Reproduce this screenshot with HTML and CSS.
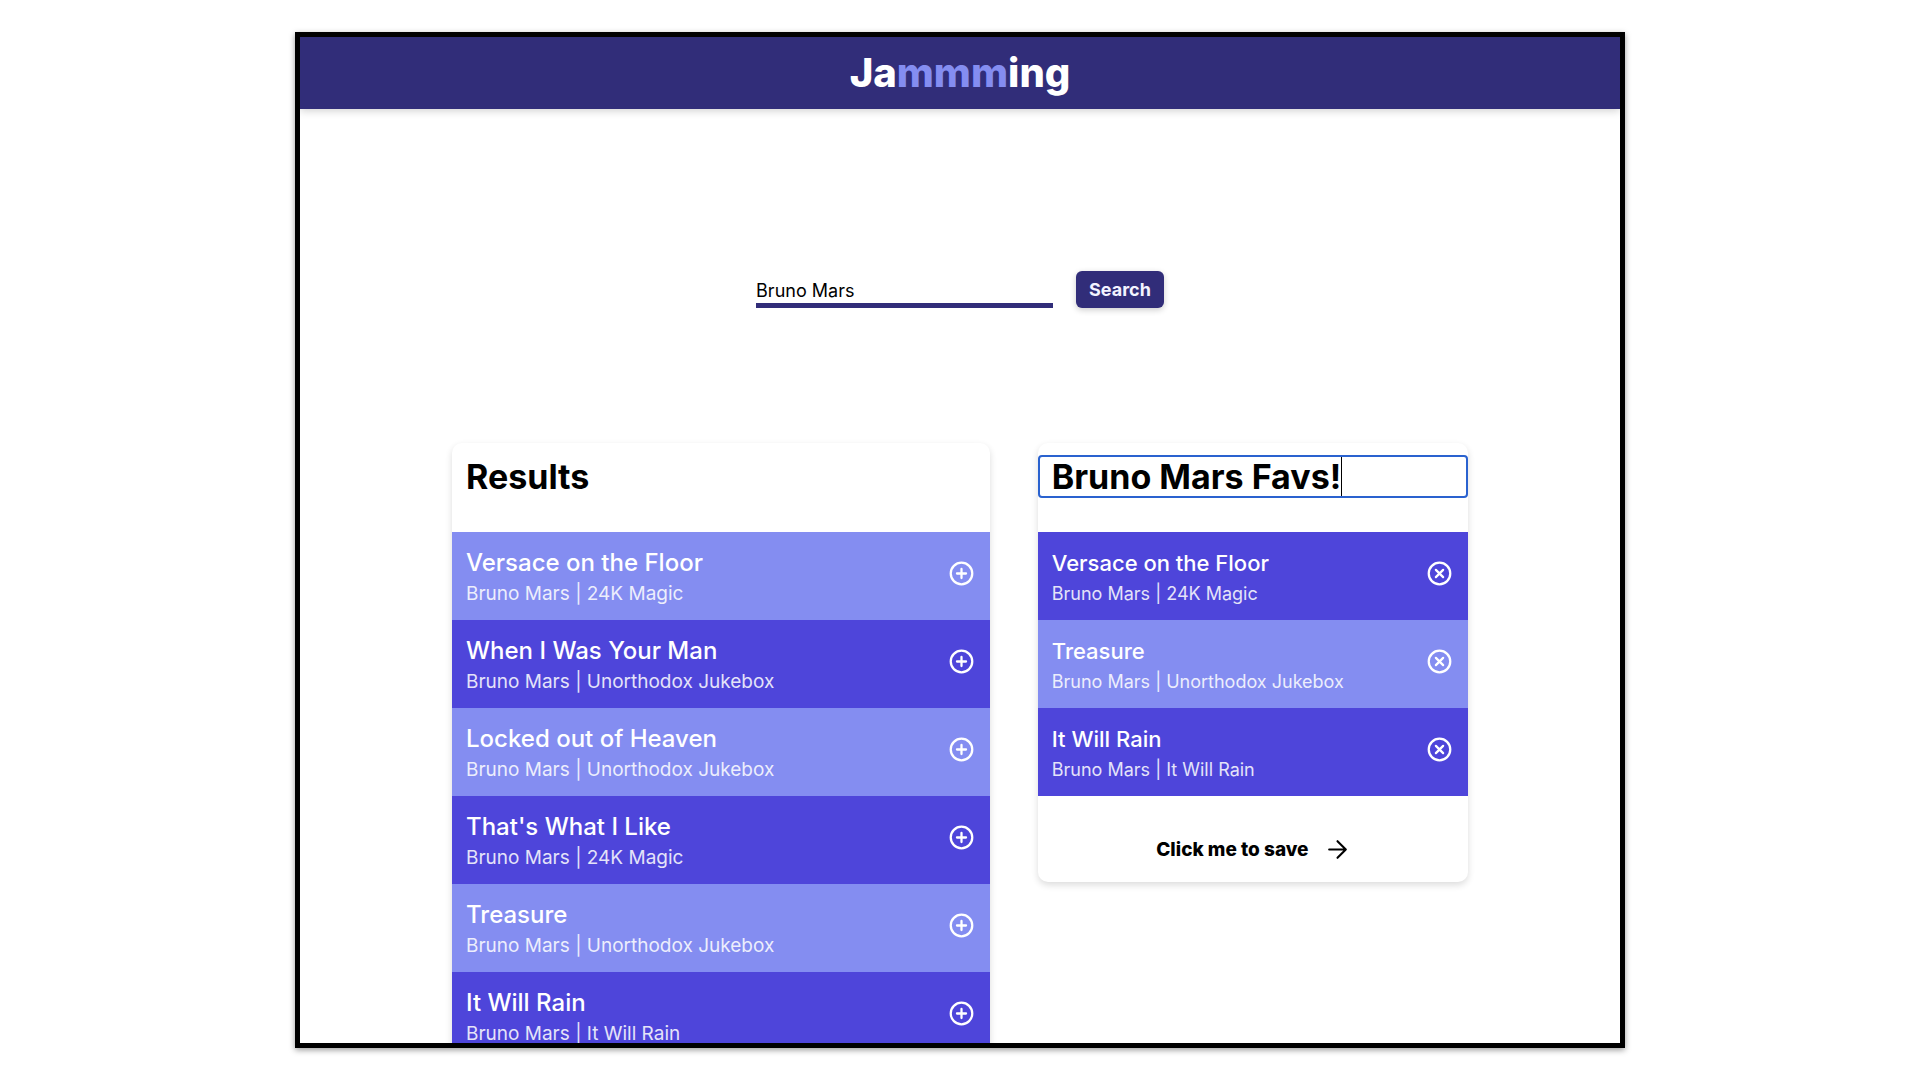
FILE: index.html
```html
<!DOCTYPE html>
<html lang="en">
<head>
<meta charset="utf-8">
<meta name="viewport" content="width=device-width, initial-scale=1">
<title>Jammming</title>
<link rel="stylesheet" href="styles.css">
</head>
<body>
<svg class="sprite" aria-hidden="true">
  <symbol id="add" viewBox="0 0 512 512"><circle cx="256" cy="256" r="190"/><path d="M256 176v160M336 256H176"/></symbol>
  <symbol id="remove" viewBox="0 0 512 512"><circle cx="256" cy="256" r="190"/><path d="M320 320 192 192M192 320l128-128"/></symbol>
  <symbol id="arrow" viewBox="0 0 24 24"><path d="M4 12h16M12 4l8 8-8 8"/></symbol>
</svg>
<div class="frame">
  <header class="header">
    <h1 class="logo">Ja<span class="logo-accent">mmm</span>ing</h1>
  </header>
  <main class="main">
    <form class="search">
      <input class="search-input" type="text" value="Bruno Mars" aria-label="Search for a song">
      <button class="search-button" type="button">Search</button>
    </form>
    <div class="columns">
      <section class="card results">
        <h2 class="card-title">Results</h2>
        <ul class="tracks">
          <li class="track"><div><h3 class="track-name">Versace on the Floor</h3><p class="track-info">Bruno Mars | 24K Magic</p></div><button class="track-action" type="button" aria-label="Add"><svg class="icon"><use href="#add"/></svg></button></li>
          <li class="track"><div><h3 class="track-name">When I Was Your Man</h3><p class="track-info">Bruno Mars | Unorthodox Jukebox</p></div><button class="track-action" type="button" aria-label="Add"><svg class="icon"><use href="#add"/></svg></button></li>
          <li class="track"><div><h3 class="track-name">Locked out of Heaven</h3><p class="track-info">Bruno Mars | Unorthodox Jukebox</p></div><button class="track-action" type="button" aria-label="Add"><svg class="icon"><use href="#add"/></svg></button></li>
          <li class="track"><div><h3 class="track-name">That's What I Like</h3><p class="track-info">Bruno Mars | 24K Magic</p></div><button class="track-action" type="button" aria-label="Add"><svg class="icon"><use href="#add"/></svg></button></li>
          <li class="track"><div><h3 class="track-name">Treasure</h3><p class="track-info">Bruno Mars | Unorthodox Jukebox</p></div><button class="track-action" type="button" aria-label="Add"><svg class="icon"><use href="#add"/></svg></button></li>
          <li class="track"><div><h3 class="track-name">It Will Rain</h3><p class="track-info">Bruno Mars | It Will Rain</p></div><button class="track-action" type="button" aria-label="Add"><svg class="icon"><use href="#add"/></svg></button></li>
        </ul>
      </section>
      <section class="card playlist">
        <div class="name-field">
          <input class="name-input" type="text" value="Bruno Mars Favs!" aria-label="Playlist name">
          <span class="caret"></span>
        </div>
        <ul class="tracks">
          <li class="track"><div><h3 class="track-name">Versace on the Floor</h3><p class="track-info">Bruno Mars | 24K Magic</p></div><button class="track-action" type="button" aria-label="Remove"><svg class="icon"><use href="#remove"/></svg></button></li>
          <li class="track"><div><h3 class="track-name">Treasure</h3><p class="track-info">Bruno Mars | Unorthodox Jukebox</p></div><button class="track-action" type="button" aria-label="Remove"><svg class="icon"><use href="#remove"/></svg></button></li>
          <li class="track"><div><h3 class="track-name">It Will Rain</h3><p class="track-info">Bruno Mars | It Will Rain</p></div><button class="track-action" type="button" aria-label="Remove"><svg class="icon"><use href="#remove"/></svg></button></li>
        </ul>
        <button class="save" type="button">Click me to save <svg class="save-icon"><use href="#arrow"/></svg></button>
      </section>
    </div>
  </main>
</div>
</body>
</html>
```
FILE: styles.css
```css
:root {
  --navy: #312d79;
  --indigo: #4e45da;
  --lilac: #848df1;
}

* {
  box-sizing: border-box;
  margin: 0;
  padding: 0;
}

body {
  padding: 32px;
  background: #fff;
  color: #000;
  font-family: Inter, "Liberation Sans", sans-serif;
}

button,
input {
  border: 0;
  background: none;
  color: inherit;
  font-family: inherit;
  outline: 0;
}

.sprite {
  display: none;
}

.frame {
  max-width: 1330px;
  height: calc(100vh - 64px);
  margin: 0 auto;
  border: 5px solid #000;
  overflow: hidden;
  box-shadow: 0 2px 6px rgba(0, 0, 0, 0.4);
}

.header {
  display: flex;
  align-items: center;
  justify-content: center;
  height: 72px;
  background: var(--navy);
  box-shadow: 0 2px 8px rgba(0, 0, 0, 0.18);
}

.logo {
  color: #fff;
  font-size: 40px;
  font-weight: 800;
  line-height: 48px;
}

.logo-accent {
  color: var(--lilac);
}

.main {
  padding: 162px 152px 0;
}

.search {
  display: flex;
  justify-content: center;
  gap: 23px;
}

.search-input {
  width: 297px;
  height: 37px;
  padding-top: 6px;
  border-bottom: 5px solid var(--navy);
  font-size: 18px;
}

.search-button {
  height: 37px;
  padding: 0 13px;
  border-radius: 6px;
  background: var(--navy);
  box-shadow: 0 2px 6px rgba(0, 0, 0, 0.2);
  color: #f3f3ff;
  font-size: 18px;
  font-weight: 700;
}

.columns {
  display: grid;
  grid-template-columns: 5fr 4fr;
  align-items: start;
  gap: 48px;
  margin-top: 135px;
}

.card {
  display: flow-root;
  border-radius: 10px;
  box-shadow: 0 3px 7px rgba(0, 0, 0, 0.14);
}

.card-title,
.name-field {
  height: 43px;
  margin: 12px 0 34px;
  font-size: 34px;
  font-weight: 700;
  line-height: 43px;
}

.card-title {
  padding-left: 14px;
}

.name-field {
  display: flex;
  padding-left: 12px;
  border: 2px solid #2a62cf;
  border-radius: 4px;
}

.name-input {
  field-sizing: content;
  font-size: 34px;
  font-weight: 700;
}

.caret {
  width: 1px;
  background: #000;
}

.tracks {
  list-style: none;
}

.track {
  display: flex;
  justify-content: space-between;
  height: 88px;
  padding: 16px 14px;
  background: var(--indigo);
  color: #fff;
}

.results .track:nth-child(odd),
.playlist .track:nth-child(even) {
  background: var(--lilac);
}

.track-name {
  font-size: 22px;
  font-weight: 500;
  line-height: 30px;
}

.track-info {
  font-size: 18px;
  line-height: 32px;
  opacity: 0.85;
}

.results .track-name {
  font-size: 24px;
}

.results .track-info {
  font-size: 19px;
}

.track-action {
  height: 50px;
  color: #fff;
}

.icon {
  display: block;
  width: 29px;
  height: 29px;
  fill: none;
  stroke: currentColor;
  stroke-width: 40;
  stroke-linecap: round;
}

.save {
  display: flex;
  align-items: center;
  justify-content: center;
  gap: 16px;
  width: 100%;
  padding: 41px 0 20px;
  font-size: 19px;
  font-weight: 800;
}

.save-icon {
  width: 25px;
  height: 25px;
  fill: none;
  stroke: currentColor;
  stroke-width: 2;
  stroke-linecap: round;
  stroke-linejoin: round;
}
```
